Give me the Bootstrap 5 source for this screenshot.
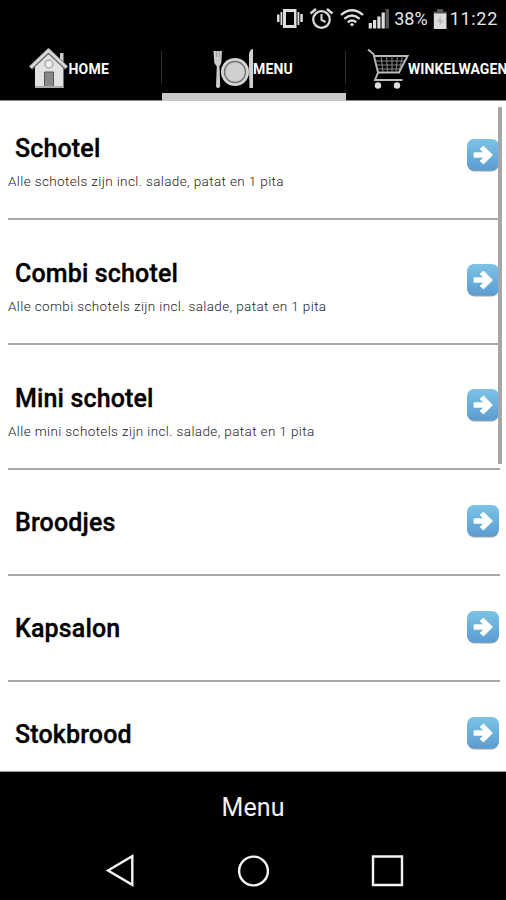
<!DOCTYPE html>
<html lang="nl">
<head>
<meta charset="utf-8">
<meta name="viewport" content="width=device-width, initial-scale=1">
<title>Menu</title>
<link href="https://cdn.jsdelivr.net/npm/bootstrap@5.3.0/dist/css/bootstrap.min.css" rel="stylesheet">
<style>
body{font-family:Roboto,"Liberation Sans",sans-serif;background:#000;width:506px;height:900px}
svg{display:block;flex:none}
.status{height:38px;padding:0 9px 0 0;color:#e6e6e6;font-size:18px;line-height:36px}
.signals{margin-top:-1px}
.pct{margin-left:0}
.battery{margin:0 2px 0 5px}
.clock{letter-spacing:.7px;margin-right:-1px}
.tabs{height:63px;border-bottom:1px solid #8c8c8c;font-size:14px;font-weight:700;color:#fff;line-height:18px;letter-spacing:.1px}
.tab{height:62px;width:184px;flex:none;position:relative;white-space:nowrap}
.tab-first{width:162px;padding-left:29px}
.tab-first span{margin-left:.5px;letter-spacing:.2px}
.tab-menu{padding-left:50px}
.tab-cart{padding-left:21px}
.tab+.tab::before{content:"";position:absolute;left:-1px;top:13px;width:1px;height:33px;background:#2c2c2c}
.tab.on::after{content:"";position:absolute;left:0;right:0;bottom:-1px;height:8px;background:#c9c9c9}
.tab-menu span{margin-left:-1px;letter-spacing:.2px}
.tab-cart span{margin-left:-1px}
.list{height:671px;background:#fff;color:#000;border-bottom:1px solid #999}
.rows{margin:-6px 6px 0 8px}
.item{height:106px;border-bottom:2px solid #a8a8a8;flex:none}
.item.tall{height:125px}
.item h2{font-size:25px;font-weight:500;line-height:30px;margin:2px 0 0 7px;letter-spacing:.15px;-webkit-text-stroke:.35px #000}
.item p{font-size:13.5px;line-height:18px;margin:8px 0 0;font-weight:300;color:#222;letter-spacing:.38px}
.tall .txt{margin-top:9px}
.go{margin:-3px .5px 0 0}
.thumb{right:4px;top:6px;width:4px;height:357px;background:#a6a6a6}
.title{height:70px;color:#f2f2f2;font-size:25px;line-height:71px;letter-spacing:.1px}
.nav3{height:58px}
</style>
</head>
<body class="overflow-hidden d-flex flex-column">
<svg width="0" height="0" class="position-absolute">
<defs>
<linearGradient id="blue" x1="0" y1="0" x2="0" y2="1"><stop offset="0" stop-color="#7cc3e6"/><stop offset="1" stop-color="#5b9cd2"/></linearGradient>
<symbol id="go" viewBox="0 0 34 34"><rect x="1.5" y="2" width="31" height="31.500" rx="7" fill="#9aa5ad"/><rect x="1" y="1" width="32" height="31.500" rx="7" fill="url(#blue)"/><path d="M8 14.700H18L14 11 17.500 8 26.500 17 17.500 26 14 23 18 19.300H8z" fill="#fff" stroke="#fff" stroke-width=".8" stroke-linejoin="round"/></symbol>
</defs>
</svg>

<header class="status d-flex justify-content-end align-items-center">
<svg class="signals" width="126" height="36" viewBox="266 0 126 36">
<g fill="#ddd"><path d="M281 8h13.500v19H281z"/><path d="M278.500 11h1.800v13h-1.800zM275 13.500h2.500v7.500H275zM295.500 11h1.800v13h-1.800zM298.300 13h2.500v8h-2.500z"/></g><path d="M284 11h8v13h-8z" fill="#000"/>
<g fill="none" stroke="#ddd"><circle cx="319.500" cy="18.500" r="8.300" stroke-width="2.200"/><path d="M319.500 13v6l4 2" stroke-width="2"/><path d="M308.500 12.500l5.500-4.500M330.500 12.500l-5.500-4.500" stroke-width="2.400"/>
<path d="M339 14q11-9.500 22 0M342.300 17.800q7.700-6.500 15.400 0M345.700 21.300q4.300-3.500 8.600 0" stroke-width="2.300"/></g><path d="M347.700 23q2.300-1.600 4.600 0l-2.300 2.800z" fill="#ddd"/>
<g fill="#ddd"><path d="M366.700 22h3.200v5.500h-3.200zM371 19h3.200v8.500H371zM375.300 15.500h3.200v12h-3.200zM379.600 11.500h3.200v16h-3.200z"/></g><path d="M383.500 8h3.500v19.500h-3.500z" fill="#555"/>
</svg>
<span class="pct">38%</span>
<svg class="battery" width="15" height="22" viewBox="0 0 15 22"><path d="M4 1h6v2.500h3.500V6H.8V3.500H4z" fill="#555"/><path d="M.8 5.500h12.700V21H.8z" fill="#dcdcdc"/><path d="M8 8l-4 6h3l-1 4 5-6H8z" fill="#bbb"/></svg>
<span class="clock">11:22</span>
</header>

<nav class="tabs d-flex">
<div class="tab tab-first d-flex align-items-center">
<svg width="39" height="42" viewBox="29 47 39 42"><path d="M60 52h3.500v10H60z" fill="#ccc"/><path d="M48.500 51L35 65v22h28.500V65z" fill="#e2e2e2"/><path d="M30.500 67L48.500 50l18 17" fill="none" stroke="#707070" stroke-width="5"/><path d="M30.500 66.500L48.500 49.500l18 17" fill="none" stroke="#d8d8d8" stroke-width="2.800"/><circle cx="49" cy="63" r="4" fill="#eee" stroke="#aaa" stroke-width="1.500"/><path d="M44.500 71h9v15.500h-9z" fill="#888" stroke="#555"/><path d="M35 86h28.500" stroke="#aaa" stroke-width="2"/></svg>
<span>HOME</span></div>
<div class="tab tab-menu on d-flex align-items-center">
<svg width="42" height="42" viewBox="212 47 42 42"><path d="M213.500 50h8.500l-.7 12-1.800 3.500.7 20q-2.200 3.500-4.200 0l.8-20-2.500-3.500z" fill="#ccc"/><path d="M216.500 50v6M219.300 50v6" stroke="#888" stroke-width=".7"/><circle cx="235" cy="71" r="14" fill="#d4d4d4"/><circle cx="235" cy="71" r="10.500" fill="#d0d0d0" stroke="#777" stroke-width="1.500"/><path d="M249 67V53q1-5 4-5v39h-3.500z" fill="#d0d0d0"/></svg>
<span>MENU</span></div>
<div class="tab tab-cart d-flex align-items-center">
<svg width="42" height="42" viewBox="367 47 42 42"><g fill="none" stroke="#bbb" stroke-width="1.900"><path d="M368 48.500l5.500 4.500 4.500 18.500-3 7.500h27.500"/><path d="M374.500 55h33l-8.500 16.500h-21"/></g><g fill="none" stroke="#888" stroke-width="1"><path d="M375.500 60h29M377 64h25M378 68h22M381 55l2 16M386.500 55l1 16M392 55v16M397.500 55l-1.500 16M402.500 55l-3 14"/></g><g fill="#ddd"><circle cx="378" cy="84.500" r="3.200"/><circle cx="397" cy="84.500" r="3.200"/></g></svg>
<span>WINKELWAGEN</span></div>
</nav>

<main class="list position-relative overflow-hidden">
<div class="rows d-flex flex-column">
<div class="item tall d-flex align-items-center justify-content-between"><div class="txt"><h2>Schotel</h2><p>Alle schotels zijn incl. salade, patat en 1 pita</p></div><svg class="go" width="34" height="34"><use href="#go"/></svg></div>
<div class="item tall d-flex align-items-center justify-content-between"><div class="txt"><h2>Combi schotel</h2><p>Alle combi schotels zijn incl. salade, patat en 1 pita</p></div><svg class="go" width="34" height="34"><use href="#go"/></svg></div>
<div class="item tall d-flex align-items-center justify-content-between"><div class="txt"><h2>Mini schotel</h2><p>Alle mini schotels zijn incl. salade, patat en 1 pita</p></div><svg class="go" width="34" height="34"><use href="#go"/></svg></div>
<div class="item d-flex align-items-center justify-content-between"><h2>Broodjes</h2><svg class="go" width="34" height="34"><use href="#go"/></svg></div>
<div class="item d-flex align-items-center justify-content-between"><h2>Kapsalon</h2><svg class="go" width="34" height="34"><use href="#go"/></svg></div>
<div class="item d-flex align-items-center justify-content-between"><h2>Stokbrood</h2><svg class="go" width="34" height="34"><use href="#go"/></svg></div>
</div>
<div class="thumb position-absolute"></div>
</main>

<div class="title text-center">Menu</div>
<footer class="nav3">
<svg width="506" height="58" viewBox="0 842 506 58" fill="none" stroke="#f4f4f4" stroke-width="2.400"><path d="M108 870.500l24.300-14.300v28.600z"/><circle cx="253.500" cy="871" r="14.400"/><path d="M373 856.500h29v28.500h-29z"/></svg>
</footer>
<script src="https://cdn.jsdelivr.net/npm/bootstrap@5.3.0/dist/js/bootstrap.bundle.min.js"></script>
</body>
</html>
